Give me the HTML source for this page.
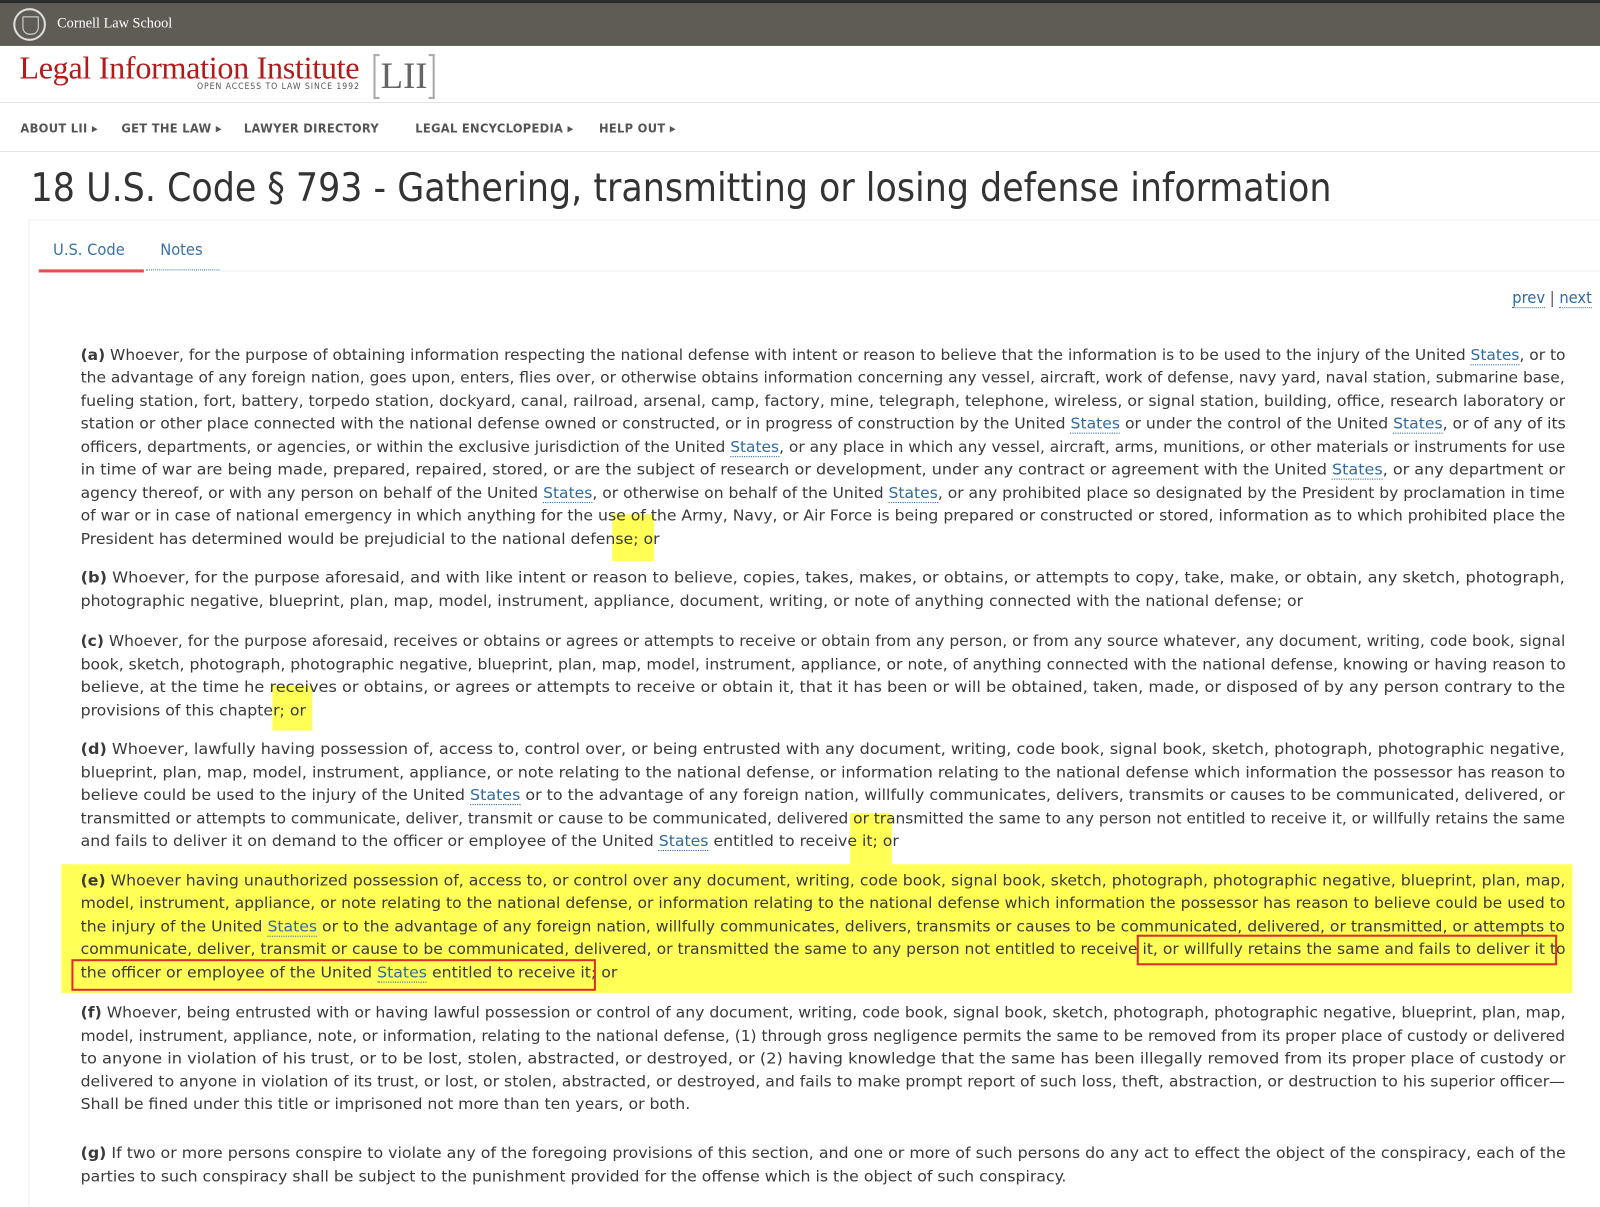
<!DOCTYPE html>
<html><head><meta charset="utf-8">
<style>
body{margin:0;width:1600px;height:1206px;overflow:hidden;background:#fff;font-family:"DejaVu Sans Condensed","DejaVu Sans",sans-serif;color:#3a3a3a}
#w{position:absolute;left:0;top:0;width:1568px;height:1182px;transform:scale(1.020408);transform-origin:0 0}
.top{position:absolute;left:0;top:0;width:1568px;height:45px;background:#5e5c55;border-top:3px solid #2c2c2c;box-sizing:border-box}
.top .seal{position:absolute;left:13px;top:5px;width:32px;height:32px;border:2px solid #ddd;border-radius:50%;box-sizing:border-box}
.top .seal:after{content:"";position:absolute;left:7px;top:6px;width:14px;height:16px;border:1px solid #ddd;border-radius:0 0 7px 7px}
.top .cls{position:absolute;left:56px;top:13px;color:#fff;font-family:"Liberation Serif",serif;font-size:14px}
.logo{position:absolute;left:19px;top:49px;color:#b31b1b;font-family:"Liberation Serif",serif;font-size:31.5px;letter-spacing:-0.3px;white-space:nowrap}
.sub{position:absolute;left:193px;top:80px;font-size:8.5px;color:#555;letter-spacing:0.9px;white-space:nowrap}
.lii{position:absolute;left:366px;top:53px;width:60px;height:40px;font-family:"Liberation Serif",serif;font-size:36px;color:#666;text-align:center;line-height:42px}
.lii:before,.lii:after{content:"";position:absolute;top:0;width:4px;height:40px;border:2px solid #aaa}
.lii:before{left:0;border-right:none}.lii:after{right:0;border-left:none}
.hl{position:absolute;left:0;width:1568px;height:1px;background:#e3e3e3}
.nav{position:absolute;top:118px;font-size:12.5px;font-weight:bold;color:#555;letter-spacing:0.3px;white-space:nowrap}
h1{position:absolute;left:30px;top:162px;margin:0;font-weight:normal;font-size:38px;color:#333;white-space:nowrap}
.tabs a{position:absolute;top:235px;color:#3a72a8;font-size:16px;text-decoration:none}
a.l{color:#2f6aa0;text-decoration:none;border-bottom:1px dotted #2f6aa0}
.ln{position:absolute;left:79px;height:22px;line-height:22px;font-size:15px;white-space:nowrap;transform-origin:0 50%}
.y{position:absolute;background:#ffff55}
.r{position:absolute;border:2px solid #d9302a;box-sizing:border-box}
</style></head><body><div id="w">
<div class="top"><div class="seal"></div><div class="cls">Cornell Law School</div></div>
<div class="logo">Legal Information Institute</div>
<div class="sub">OPEN ACCESS TO LAW SINCE 1992</div>
<div class="lii">LII</div>
<div class="hl" style="top:100px"></div>
<div class="nav" style="left:20px">ABOUT LII ▸</div>
<div class="nav" style="left:119px">GET THE LAW ▸</div>
<div class="nav" style="left:239px">LAWYER DIRECTORY</div>
<div class="nav" style="left:407px">LEGAL ENCYCLOPEDIA ▸</div>
<div class="nav" style="left:587px">HELP OUT ▸</div>
<div class="hl" style="top:148px"></div>
<h1>18 U.S. Code § 793 - Gathering, transmitting or losing defense information</h1>
<div style="position:absolute;left:28px;top:215px;width:1540px;height:967px;border-left:1px solid #eee;border-top:1px solid #eee"></div>
<div class="tabs"><a style="left:52px">U.S. Code</a><a style="left:157px">Notes</a></div>
<div style="position:absolute;left:38px;top:264px;width:103px;height:3px;background:#e05050"></div>
<div style="position:absolute;left:143px;top:264px;width:72px;border-top:1px dotted #3a72a8"></div>
<div class="hl" style="top:265px;left:215px;width:1353px;background:#eee"></div>
<div style="position:absolute;right:8px;top:282px;font-size:16px;color:#555"><a class="l">prev</a> | <a class="l">next</a></div>

<div class="y" style="left:60px;top:847px;width:1481px;height:126px"></div>
<div class="y" style="left:600px;top:504px;width:41px;height:46px"></div>
<div class="y" style="left:267px;top:672px;width:39px;height:44px"></div>
<div class="y" style="left:833px;top:797px;width:41px;height:50px"></div>

<div id="txt">
<div class="ln f" style="top:337px"><b>(a)</b> Whoever, for the purpose of obtaining information respecting the national defense with intent or reason to believe that the information is to be used to the injury of the United <a class="l">States</a>, or to</div>
<div class="ln f" style="top:359px">the advantage of any foreign nation, goes upon, enters, flies over, or otherwise obtains information concerning any vessel, aircraft, work of defense, navy yard, naval station, submarine base,</div>
<div class="ln f" style="top:382px">fueling station, fort, battery, torpedo station, dockyard, canal, railroad, arsenal, camp, factory, mine, telegraph, telephone, wireless, or signal station, building, office, research laboratory or</div>
<div class="ln f" style="top:404px">station or other place connected with the national defense owned or constructed, or in progress of construction by the United <a class="l">States</a> or under the control of the United <a class="l">States</a>, or of any of its</div>
<div class="ln f" style="top:427px">officers, departments, or agencies, or within the exclusive jurisdiction of the United <a class="l">States</a>, or any place in which any vessel, aircraft, arms, munitions, or other materials or instruments for use</div>
<div class="ln f" style="top:449px">in time of war are being made, prepared, repaired, stored, or are the subject of research or development, under any contract or agreement with the United <a class="l">States</a>, or any department or</div>
<div class="ln f" style="top:472px">agency thereof, or with any person on behalf of the United <a class="l">States</a>, or otherwise on behalf of the United <a class="l">States</a>, or any prohibited place so designated by the President by proclamation in time</div>
<div class="ln f" style="top:494px">of war or in case of national emergency in which anything for the use of the Army, Navy, or Air Force is being prepared or constructed or stored, information as to which prohibited place the</div>
<div class="ln" style="top:517px">President has determined would be prejudicial to the national defense; or</div>

<div class="ln f" style="top:555px"><b>(b)</b> Whoever, for the purpose aforesaid, and with like intent or reason to believe, copies, takes, makes, or obtains, or attempts to copy, take, make, or obtain, any sketch, photograph,</div>
<div class="ln" style="top:578px">photographic negative, blueprint, plan, map, model, instrument, appliance, document, writing, or note of anything connected with the national defense; or</div>

<div class="ln f" style="top:617px"><b>(c)</b> Whoever, for the purpose aforesaid, receives or obtains or agrees or attempts to receive or obtain from any person, or from any source whatever, any document, writing, code book, signal</div>
<div class="ln f" style="top:640px">book, sketch, photograph, photographic negative, blueprint, plan, map, model, instrument, appliance, or note, of anything connected with the national defense, knowing or having reason to</div>
<div class="ln f" style="top:662px">believe, at the time he receives or obtains, or agrees or attempts to receive or obtain it, that it has been or will be obtained, taken, made, or disposed of by any person contrary to the</div>
<div class="ln" style="top:685px">provisions of this chapter; or</div>

<div class="ln f" style="top:723px"><b>(d)</b> Whoever, lawfully having possession of, access to, control over, or being entrusted with any document, writing, code book, signal book, sketch, photograph, photographic negative,</div>
<div class="ln f" style="top:746px">blueprint, plan, map, model, instrument, appliance, or note relating to the national defense, or information relating to the national defense which information the possessor has reason to</div>
<div class="ln f" style="top:768px">believe could be used to the injury of the United <a class="l">States</a> or to the advantage of any foreign nation, willfully communicates, delivers, transmits or causes to be communicated, delivered, or</div>
<div class="ln f" style="top:791px">transmitted or attempts to communicate, deliver, transmit or cause to be communicated, delivered or transmitted the same to any person not entitled to receive it, or willfully retains the same</div>
<div class="ln" style="top:813px">and fails to deliver it on demand to the officer or employee of the United <a class="l">States</a> entitled to receive it; or</div>

<div class="ln f" style="top:852px"><b>(e)</b> Whoever having unauthorized possession of, access to, or control over any document, writing, code book, signal book, sketch, photograph, photographic negative, blueprint, plan, map,</div>
<div class="ln f" style="top:874px">model, instrument, appliance, or note relating to the national defense, or information relating to the national defense which information the possessor has reason to believe could be used to</div>
<div class="ln f" style="top:897px">the injury of the United <a class="l">States</a> or to the advantage of any foreign nation, willfully communicates, delivers, transmits or causes to be communicated, delivered, or transmitted, or attempts to</div>
<div class="ln f" style="top:919px">communicate, deliver, transmit or cause to be communicated, delivered, or transmitted the same to any person not entitled to receive it, or willfully retains the same and fails to deliver it to</div>
<div class="ln" style="top:942px">the officer or employee of the United <a class="l">States</a> entitled to receive it; or</div>

<div class="ln f" style="top:981px"><b>(f)</b> Whoever, being entrusted with or having lawful possession or control of any document, writing, code book, signal book, sketch, photograph, photographic negative, blueprint, plan, map,</div>
<div class="ln f" style="top:1004px">model, instrument, appliance, note, or information, relating to the national defense, (1) through gross negligence permits the same to be removed from its proper place of custody or delivered</div>
<div class="ln f" style="top:1026px">to anyone in violation of his trust, or to be lost, stolen, abstracted, or destroyed, or (2) having knowledge that the same has been illegally removed from its proper place of custody or</div>
<div class="ln f" style="top:1049px">delivered to anyone in violation of its trust, or lost, or stolen, abstracted, or destroyed, and fails to make prompt report of such loss, theft, abstraction, or destruction to his superior officer—</div>
<div class="ln" style="top:1071px">Shall be fined under this title or imprisoned not more than ten years, or both.</div>

<div class="ln f" style="top:1119px"><b>(g)</b> If two or more persons conspire to violate any of the foregoing provisions of this section, and one or more of such persons do any act to effect the object of the conspiracy, each of the</div>
<div class="ln" style="top:1142px">parties to such conspiracy shall be subject to the punishment provided for the offense which is the object of such conspiracy.</div>
</div>

<div class="r" style="left:1114px;top:916px;width:412px;height:30px"></div>
<div class="r" style="left:70px;top:940px;width:514px;height:31px"></div>
</div>
<script>
(function(){
 var lines=document.querySelectorAll('#txt .ln'),sum=0,n=0;
 lines.forEach(function(l){if(l.classList.contains('f')){var w=l.scrollWidth;var s=1455/w;l.style.transform='scaleX('+s+')';sum+=s;n++;}});
 var avg=n?sum/n:1;
 lines.forEach(function(l){if(!l.classList.contains('f'))l.style.transform='scaleX('+avg+')';});
})();
</script>
</body></html>
